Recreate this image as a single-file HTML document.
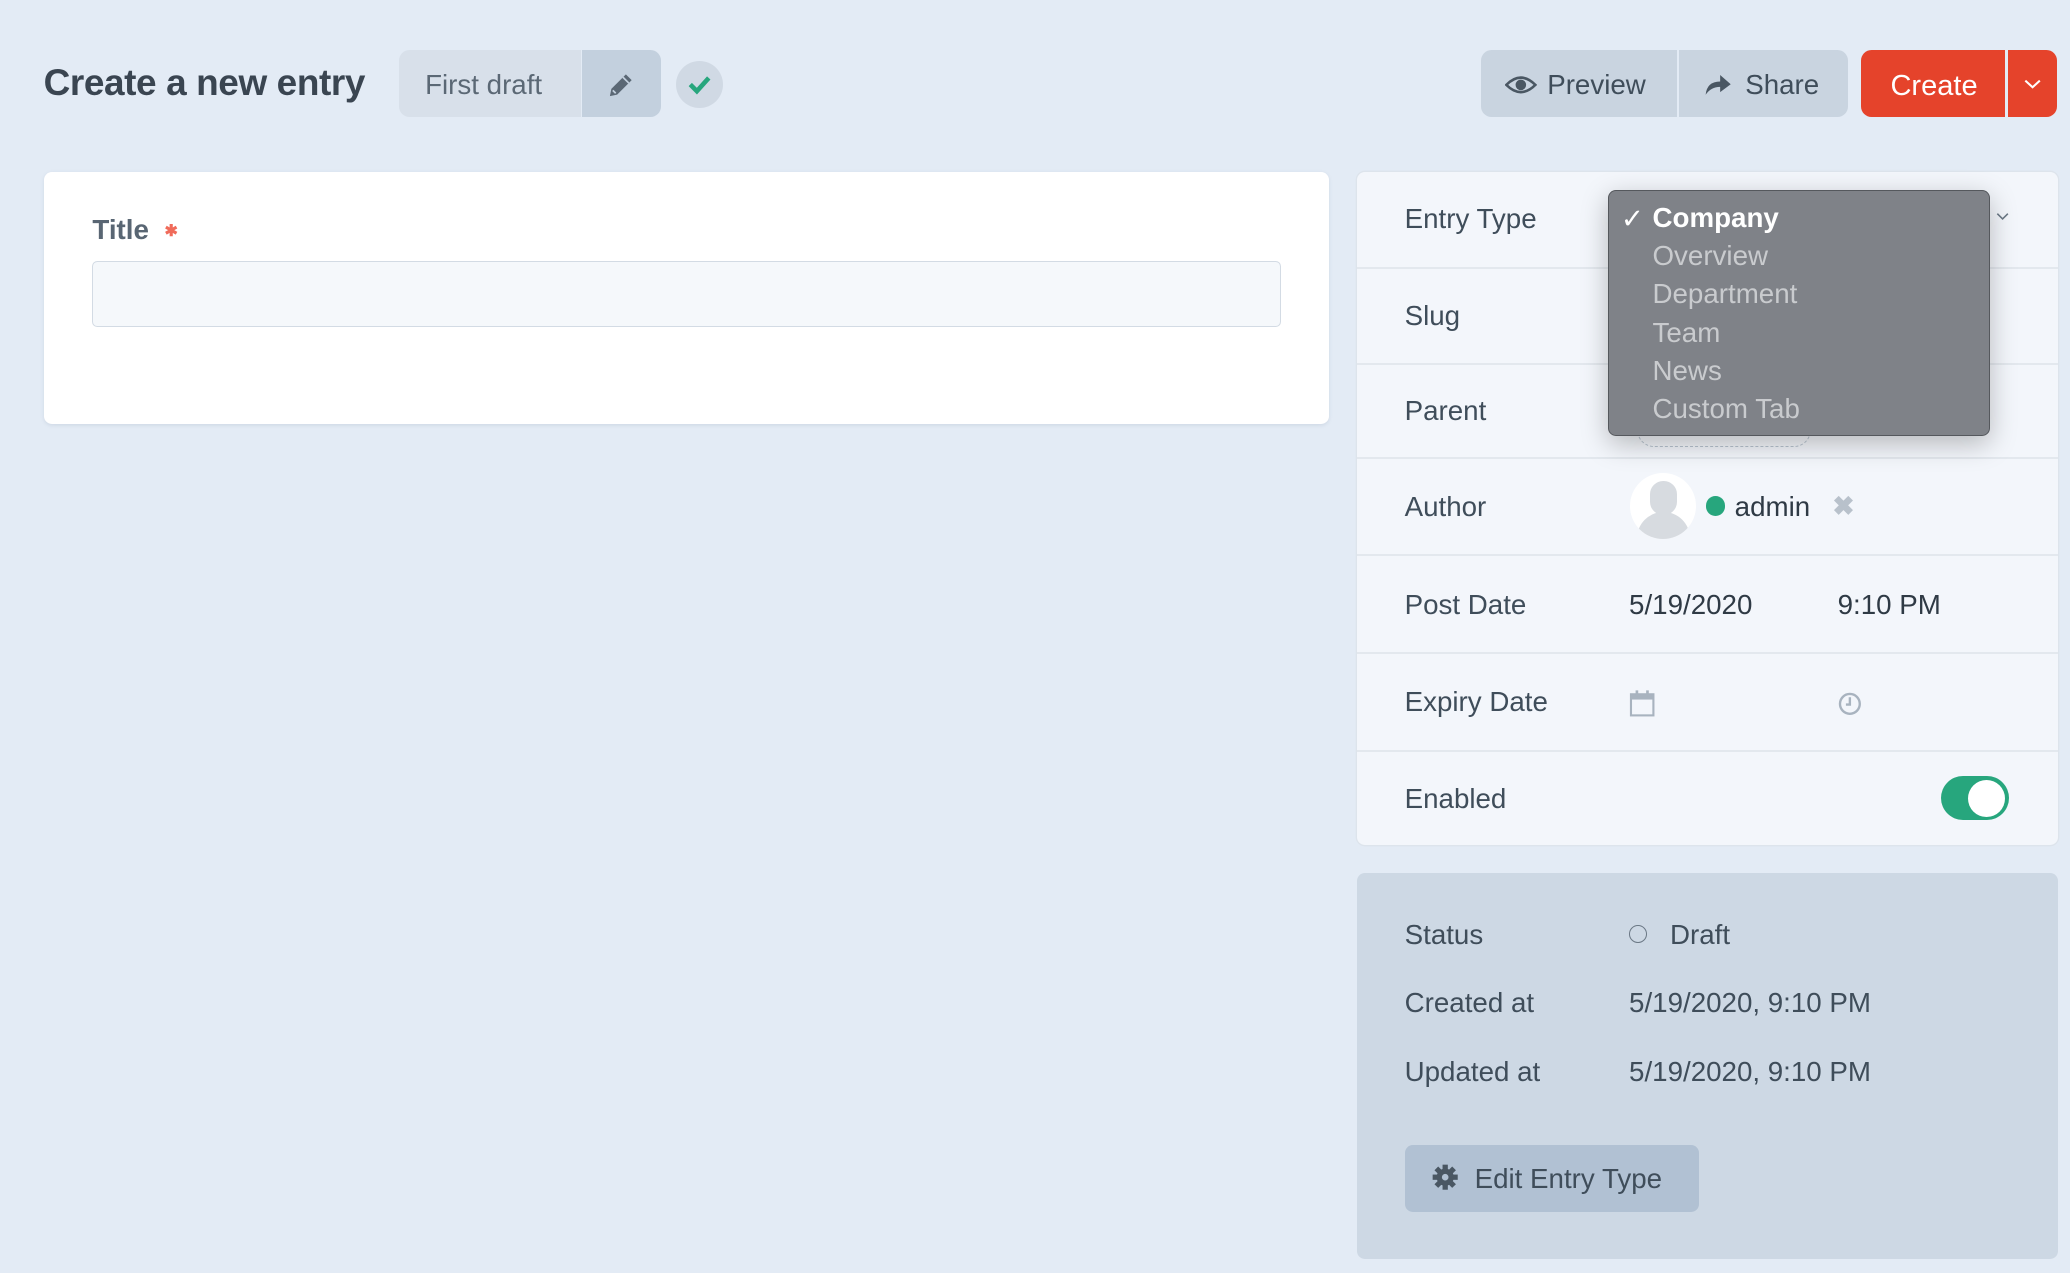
<!DOCTYPE html>
<html><head><meta charset="utf-8"><style>
html,body{margin:0;padding:0;}
body{width:1568px;height:964px;zoom:1.32015;background:#e3ebf5;font-family:"Liberation Sans",sans-serif;color:#3f4d5a;position:relative;overflow:hidden;}
.a{position:absolute;}
.t{font-size:21px;}
.row{position:absolute;left:0;right:0;border-top:2px solid #e3e8ee;}
.lbl{position:absolute;left:36px;font-size:21px;color:#3f4d5a;}
</style></head><body>
<div class="a" style="left:33px;top:47px;font-size:28px;font-weight:bold;color:#3a4551;letter-spacing:-0.3px;">Create a new entry</div>
<div class="a" style="left:302px;top:38px;width:138px;height:51px;background:#d8e0ea;border-radius:8px 0 0 8px;"></div>
<div class="a t" style="left:322px;top:52px;color:#5b6875;">First draft</div>
<div class="a" style="left:441px;top:38px;width:60px;height:51px;background:#c3d0de;border-radius:0 8px 8px 0;"></div>
<svg class="a" style="left:460px;top:53px" width="22" height="22" viewBox="0 0 20 20"><path d="M2 18 L3 13 L13 3 L17 7 L7 17 Z" fill="#5b6875"/><path d="M11 5 L15 9 M4 14 L6 16" stroke="#c3d0de" stroke-width="1.2"/></svg>
<div class="a" style="left:512px;top:46px;width:36px;height:36px;border-radius:50%;background:#d0d9e4;"></div>
<svg class="a" style="left:519px;top:53px" width="22" height="22" viewBox="0 0 22 22"><path d="M4 11 L9 16 L18 6" stroke="#27a67d" stroke-width="3.5" fill="none"/></svg>

<div class="a" style="left:1122px;top:38px;width:148px;height:51px;background:#c9d4e0;border-radius:8px 0 0 8px;"></div>
<div class="a" style="left:1272px;top:38px;width:128px;height:51px;background:#c9d4e0;border-radius:0 8px 8px 0;"></div>
<svg class="a" style="left:1140px;top:55px" width="24" height="18" viewBox="0 0 24 18"><path d="M1 9 Q12 -2 23 9 Q12 20 1 9Z" fill="none" stroke="#4a5763" stroke-width="2"/><circle cx="12" cy="9" r="4" fill="#4a5763"/></svg>
<div class="a t" style="left:1172px;top:52px;">Preview</div>
<svg class="a" style="left:1290px;top:54px" width="22" height="20" viewBox="0 0 22 20"><path d="M2 18 Q3 8 13 8 L13 3 L21 10 L13 16 L13 12 Q6 12 2 18Z" fill="#4a5763"/></svg>
<div class="a t" style="left:1322px;top:52px;">Share</div>
<div class="a" style="left:1410px;top:38px;width:109px;height:51px;background:#e5432b;border-radius:8px 0 0 8px;"></div>
<div class="a" style="left:1521px;top:38px;width:37px;height:51px;background:#e5432b;border-radius:0 8px 8px 0;"></div>
<div class="a t" style="left:1432px;top:53px;color:#fff;font-size:22px;">Create</div>
<svg class="a" style="left:1533px;top:59px" width="13" height="10" viewBox="0 0 13 10"><path d="M1 2 L6.5 7 L12 2" stroke="#fff" stroke-width="1.6" fill="none"/></svg>

<div class="a" style="left:33px;top:130px;width:974px;height:191px;background:#fff;border-radius:6px;box-shadow:0 1px 3px rgba(100,120,150,.15);"></div>
<div class="a" style="left:70px;top:162px;font-size:21px;font-weight:bold;color:#596673;">Title <span style="color:#f06b5a;font-size:12px;vertical-align:2px;margin-left:6px;">✱</span></div>
<div class="a" style="left:70px;top:198px;width:899px;height:48px;border:1px solid #d3dbe4;border-radius:4px;background:#f5f8fb;"></div>

<div class="a" style="left:1028px;top:130px;width:531px;height:510px;background:#f3f6fb;border-radius:6px;box-shadow:0 0 0 1px #dde4ec;overflow:hidden;">
 <div class="lbl" style="top:24px;">Entry Type</div>
 <div class="row" style="top:72px"></div><div class="lbl" style="top:97px;">Slug</div>
 <div class="row" style="top:145px"></div><div class="lbl" style="top:169px;">Parent</div>
 <div class="row" style="top:216px"></div><div class="lbl" style="top:242px;">Author</div>
 <div class="row" style="top:290px"></div><div class="lbl" style="top:316px;">Post Date</div>
 <div class="row" style="top:364px"></div><div class="lbl" style="top:390px;">Expiry Date</div>
 <div class="row" style="top:438px"></div><div class="lbl" style="top:463px;">Enabled</div>
 <svg class="a" style="left:484px;top:30px" width="10" height="8" viewBox="0 0 10 8"><path d="M1 2 L5 6 L9 2" stroke="#6b7885" stroke-width="1.2" fill="none"/></svg>
 <div class="a" style="left:212px;top:196px;width:130px;height:12px;border:1.5px dashed #b8c3cf;border-top:none;border-radius:0 0 14px 14px;"></div>
 <div class="a" style="left:207px;top:228px;width:50px;height:50px;border-radius:50%;background:#fff;overflow:hidden;">
  <div class="a" style="left:15px;top:6px;width:20px;height:26px;border-radius:10px;background:#d7dbe0;"></div>
  <div class="a" style="left:5px;top:30px;width:40px;height:30px;border-radius:20px 20px 0 0;background:#d7dbe0;"></div>
 </div>
 <div class="a" style="left:264px;top:246px;width:15px;height:15px;border-radius:50%;background:#27a67d;"></div>
 <div class="a t" style="left:286px;top:242px;color:#2f3a45;">admin</div>
 <div class="a" style="left:360px;top:242px;font-size:20px;color:#b8c1cb;font-weight:bold;">✖</div>
 <div class="a t" style="left:206px;top:316px;color:#2f3a45;">5/19/2020</div>
 <div class="a t" style="left:364px;top:316px;color:#2f3a45;">9:10 PM</div>
 <svg class="a" style="left:206px;top:392px" width="20" height="22" viewBox="0 0 20 22"><rect x="1.5" y="4" width="17" height="16" fill="none" stroke="#a8b3bf" stroke-width="1.6"/><rect x="1.5" y="4" width="17" height="4" fill="#a8b3bf"/><path d="M6 1 V6 M14 1 V6" stroke="#a8b3bf" stroke-width="2"/></svg>
 <svg class="a" style="left:364px;top:394px" width="18" height="18" viewBox="0 0 18 18"><circle cx="9" cy="9" r="7.5" fill="none" stroke="#a8b3bf" stroke-width="1.8"/><path d="M9 4 V9.5 H6" stroke="#a8b3bf" stroke-width="1.8" fill="none"/></svg>
 <div class="a" style="left:442px;top:458px;width:52px;height:33px;border-radius:17px;background:#27a67d;"></div>
 <div class="a" style="left:463px;top:461px;width:28px;height:28px;border-radius:50%;background:#fff;"></div>
</div>

<div class="a" style="left:1218px;top:144px;width:288px;height:185px;background:#7f8288;border:1px solid #55585d;border-radius:6px;box-shadow:0 6px 20px rgba(0,0,0,.25);font-size:21px;">
 <div class="a" style="left:9px;top:8px;color:#fff;">✓</div>
 <div class="a" style="left:33px;top:8px;color:#fff;font-weight:bold;">Company</div>
 <div class="a" style="left:33px;top:37px;color:#c9cbce;">Overview</div>
 <div class="a" style="left:33px;top:66px;color:#c9cbce;">Department</div>
 <div class="a" style="left:33px;top:95px;color:#c9cbce;">Team</div>
 <div class="a" style="left:33px;top:124px;color:#c9cbce;">News</div>
 <div class="a" style="left:33px;top:153px;color:#c9cbce;">Custom Tab</div>
</div>

<div class="a" style="left:1028px;top:661px;width:531px;height:293px;background:#cdd8e4;border-radius:6px;">
 <div class="lbl" style="top:35px;">Status</div>
 <div class="a" style="left:206px;top:40px;width:12px;height:12px;border:1.5px solid #6b7885;border-radius:50%;"></div>
 <div class="a t" style="left:237px;top:35px;">Draft</div>
 <div class="lbl" style="top:87px;">Created at</div>
 <div class="a t" style="left:206px;top:87px;">5/19/2020, 9:10 PM</div>
 <div class="lbl" style="top:139px;">Updated at</div>
 <div class="a t" style="left:206px;top:139px;">5/19/2020, 9:10 PM</div>
 <div class="a" style="left:36px;top:206px;width:223px;height:51px;background:#b1c1d3;border-radius:6px;"></div>
 <svg class="a" style="left:57px;top:221px" width="20" height="20" viewBox="0 0 20 20"><g fill="#4a5763"><circle cx="10" cy="10" r="6.5"/><rect x="8" y="0.5" width="4" height="19"/><rect x="0.5" y="8" width="19" height="4"/><rect x="8" y="0.5" width="4" height="19" transform="rotate(45 10 10)"/><rect x="8" y="0.5" width="4" height="19" transform="rotate(-45 10 10)"/></g><circle cx="10" cy="10" r="2.5" fill="#b1c1d3"/></svg>
 <div class="a t" style="left:89px;top:220px;">Edit Entry Type</div>
</div>
</body></html>
